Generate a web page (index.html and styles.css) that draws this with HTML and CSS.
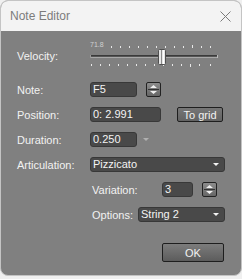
FILE: index.html
```html
<!DOCTYPE html>
<html>
<head>
<meta charset="utf-8">
<link rel="stylesheet" href="styles.css">
</head>
<body>
<div class="window">
  <div class="titlebar">
    <span class="title">Note Editor</span>
    <svg class="close" width="11" height="11" viewBox="0 0 11 11"><path d="M0.5 0.5 L10.5 10.5 M10.5 0.5 L0.5 10.5" stroke="#7a7a7a" stroke-width="1" fill="none"/></svg>
  </div>
  <div class="content">
    <div class="row velocity">
      <span class="label">Velocity:</span>
      <div class="slider">
        <span class="slider-val">71.8</span>
        <svg width="132" height="30" viewBox="0 0 132 30">
          <g stroke="#e8e8e8" stroke-width="1">
            <path d="M21.5 5 v2 M30.5 5 v2 M39.5 5 v2 M48.5 5 v2 M57.5 5 v2 M66.5 5 v2 M75.5 5 v2 M84.5 5 v2 M93.5 5 v2 M102.5 4 v3 M111.5 5 v2 M120.5 5 v2"/>
            <path d="M1.5 23 v2 M10.5 23 v2 M19.5 23 v2 M28.5 23 v2 M37.5 23 v2 M46.5 23 v2 M55.5 23 v2 M64.5 23 v2 M73.5 23 v2 M82.5 23 v2 M91.5 23 v2 M100.5 23 v3 M109.5 23 v2 M120.5 23 v2"/>
          </g>
          <rect x="0" y="14" width="128" height="1" fill="#3a3a3a"/>
          <rect x="0" y="15" width="128" height="1" fill="#555"/>
          <rect x="0" y="16" width="128" height="1" fill="#a8a8a8"/>
          <rect x="0" y="14" width="1" height="3" fill="#999"/>
          <rect x="127" y="14" width="1" height="3" fill="#bbb"/>
          <rect x="68.5" y="8.5" width="7" height="15" rx="1" fill="#e6e6e6" stroke="#505050"/>
          <rect x="71" y="9" width="1" height="14" fill="#8a8a8a"/>
          <rect x="73" y="9" width="1" height="14" fill="#fff"/>
        </svg>
      </div>
    </div>
    <div class="row">
      <span class="label">Note:</span>
      <div class="field w47">F5</div>
      <span class="spin spin-note"><svg width="15" height="15" viewBox="0 0 15 15"><path d="M4 6 L7.5 3 L11 6 Z M4 9 L7.5 12 L11 9 Z" fill="#f0f0f0"/><path d="M2 7.5 H13" stroke="#333" stroke-width="1"/></svg></span>
    </div>
    <div class="row">
      <span class="label">Position:</span>
      <div class="field w71">0: 2.991</div>
      <button class="btn togrid">To grid</button>
    </div>
    <div class="row">
      <span class="label">Duration:</span>
      <div class="field w47">0.250</div>
      <span class="tiny-arrow"></span>
    </div>
    <div class="row">
      <span class="label">Articulation:</span>
      <div class="field combo w135">Pizzicato<span class="arrow"></span></div>
    </div>
    <div class="row sub">
      <span class="sublabel var">Variation:</span>
      <div class="field w31">3</div>
      <span class="spin spin-var"><svg width="15" height="15" viewBox="0 0 15 15"><path d="M4 6 L7.5 3 L11 6 Z M4 9 L7.5 12 L11 9 Z" fill="#f0f0f0"/><path d="M2 7.5 H13" stroke="#333" stroke-width="1"/></svg></span>
    </div>
    <div class="row sub">
      <span class="sublabel opt">Options:</span>
      <div class="field combo w87">String 2<span class="arrow"></span></div>
    </div>
    <div class="footer">
      <button class="btn ok">OK</button>
    </div>
  </div>
</div>
</body>
</html>
```

FILE: styles.css
```css
html, body {
  margin: 0;
  padding: 0;
  background: #f0f0f0;
}
.window {
  width: 242px;
  height: 276px;
  box-sizing: border-box;
  border: 1px solid #c4c4c4;
  border-radius: 8px;
  overflow: hidden;
  background: #808080;
  font-family: "Liberation Sans", Arial, sans-serif;
}
.titlebar {
  height: 30px;
  background: #f3f3f3;
  display: flex;
  align-items: center;
  justify-content: space-between;
  padding: 0 10px 0 9px;
}
.title {
  font-size: 12px;
  color: #7c7c7c;
}
.close {
  display: block;
  margin-top: 1px;
}
.content {
  padding: 10px 0 0 16px;
  display: flex;
  flex-direction: column;
  gap: 10px;
}
.row {
  display: flex;
  align-items: center;
  height: 15px;
}
.row.velocity {
  height: 30px;
  margin-bottom: 1px;
}
.label {
  width: 73px;
  flex: none;
  font-size: 11px;
  color: #f2f2f2;
}
.sublabel {
  flex: none;
  font-size: 11px;
  color: #f2f2f2;
  margin-left: 75px;
}
.sublabel.var { width: 70px; }
.sublabel.opt { width: 46px; }
.slider {
  position: relative;
  width: 132px;
  height: 30px;
}
.slider svg { display: block; }
.slider-val {
  position: absolute;
  left: 0;
  top: 0;
  font-size: 7px;
  color: #d0d0d0;
  line-height: 8px;
}
.field {
  box-sizing: border-box;
  height: 15px;
  background: #494949;
  border: 1px solid #383838;
  border-radius: 3px;
  color: #f4f4f4;
  font-size: 11px;
  line-height: 13px;
  padding-left: 2px;
  flex: none;
}
.w47 { width: 47px; }
.w71 { width: 71px; }
.w135 { width: 135px; }
.w31 { width: 31px; }
.w87 { width: 87px; }
.combo {
  display: flex;
  justify-content: space-between;
  align-items: center;
  padding-right: 5px;
}
.arrow {
  width: 0;
  height: 0;
  border-left: 3px solid transparent;
  border-right: 3px solid transparent;
  border-top: 3px solid #f4f4f4;
}
.tiny-arrow {
  margin-left: 6px;
  margin-top: -1px;
  width: 0;
  height: 0;
  border-left: 3px solid transparent;
  border-right: 3px solid transparent;
  border-top: 3px solid #b0b0b0;
}
.spin {
  box-sizing: border-box;
  width: 15px;
  height: 15px;
  border: 1px solid #222;
  border-radius: 2px;
  background: linear-gradient(#8c8c8c, #666);
  display: flex;
  align-items: center;
  justify-content: center;
  overflow: hidden;
}
.spin svg { display: block; flex: none; }
.spin-note { margin-left: 9px; }
.spin-var { margin-left: 9px; }
.btn {
  box-sizing: border-box;
  font-family: "Liberation Sans", Arial, sans-serif;
  font-size: 11px;
  color: #f2f2f2;
  border: 1px solid #1e1e1e;
  border-radius: 2px;
  padding: 0;
  background: linear-gradient(#767676, #636363);
}
.togrid {
  width: 46px;
  height: 15px;
  margin-left: 16px;
  line-height: 12px;
}
.footer {
  display: flex;
  justify-content: flex-end;
  padding-right: 17px;
  margin-top: 11px;
}
.ok {
  width: 62px;
  height: 19px;
  background: linear-gradient(#7c7c7c, #5c5c5c);
}
```
